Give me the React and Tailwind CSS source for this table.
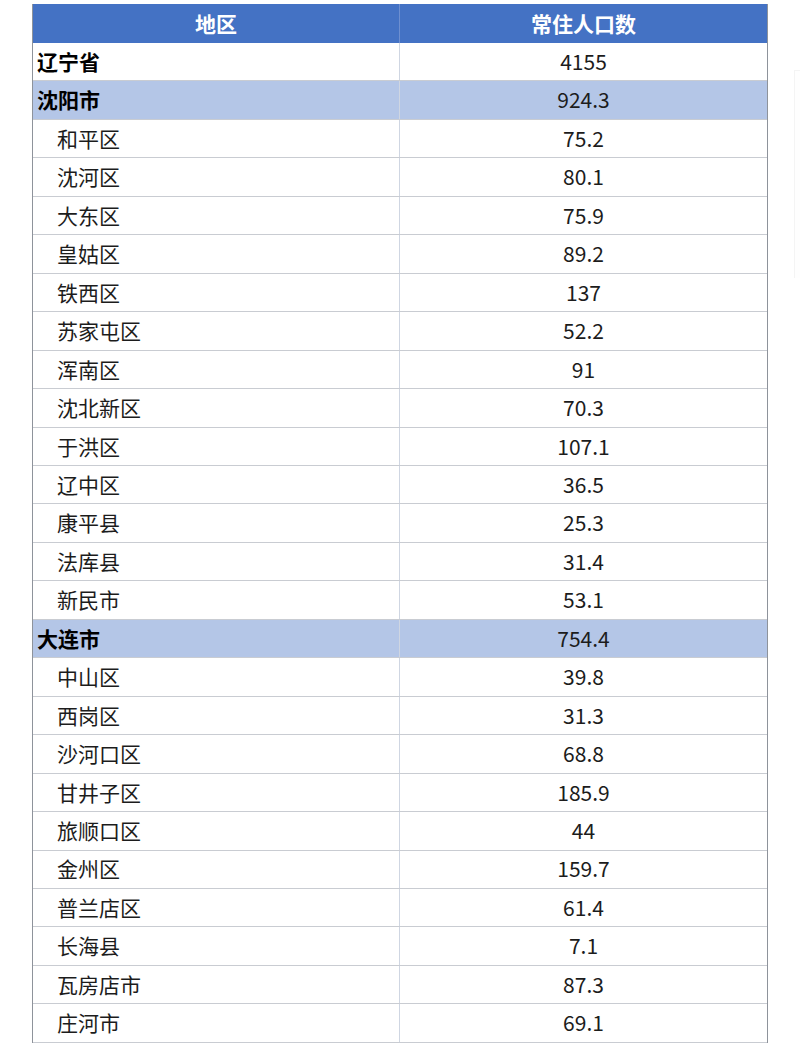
import React from "react";

const rows = [
  { name: "辽宁省", value: "4155", level: 0 },
  { name: "沈阳市", value: "924.3", level: 1 },
  { name: "和平区", value: "75.2" },
  { name: "沈河区", value: "80.1" },
  { name: "大东区", value: "75.9" },
  { name: "皇姑区", value: "89.2" },
  { name: "铁西区", value: "137" },
  { name: "苏家屯区", value: "52.2" },
  { name: "浑南区", value: "91" },
  { name: "沈北新区", value: "70.3" },
  { name: "于洪区", value: "107.1" },
  { name: "辽中区", value: "36.5" },
  { name: "康平县", value: "25.3" },
  { name: "法库县", value: "31.4" },
  { name: "新民市", value: "53.1" },
  { name: "大连市", value: "754.4", level: 1 },
  { name: "中山区", value: "39.8" },
  { name: "西岗区", value: "31.3" },
  { name: "沙河口区", value: "68.8" },
  { name: "甘井子区", value: "185.9" },
  { name: "旅顺口区", value: "44" },
  { name: "金州区", value: "159.7" },
  { name: "普兰店区", value: "61.4" },
  { name: "长海县", value: "7.1" },
  { name: "瓦房店市", value: "87.3" },
  { name: "庄河市", value: "69.1" },
];

const Row = ({ name, value, level }) => {
  const city = level === 1;
  const top = level === 0 || level === 1;
  return (
    <div
      className={
        "grid grid-cols-2 h-[38.46px] border-b border-[#c9ccd2] " +
        (city ? "bg-[#b4c6e7]" : "bg-white")
      }
    >
      <div
        className={
          "flex items-center border-r border-[#cfd6e2] " +
          (top ? "pl-1 font-bold text-black" : "pl-6 text-[#1c1c1c]")
        }
      >
        {name}
      </div>
      <div className="flex items-center justify-center text-[#1c1c1c]">
        {value}
      </div>
    </div>
  );
};

export default function App() {
  return (
    <div
      className="w-[800px] h-[1043px] overflow-hidden bg-white pt-1 pl-8 flex flex-row text-[21px]"
      style={{ fontFamily: '"Noto Sans CJK SC", "Noto Sans", sans-serif' }}
    >
      <div className="w-[736px] shrink-0 border-x border-[#8e939b] flex flex-col">
        <div className="grid grid-cols-2 h-[39px] bg-[#4472c4] text-white font-bold">
          <div className="flex items-center justify-center border-r border-[#6e8fd0]">
            地区
          </div>
          <div className="flex items-center justify-center">常住人口数</div>
        </div>
        {rows.map((r) => (
          <Row key={r.name} {...r} />
        ))}
      </div>
      <div className="flex-1 pt-[66px] pl-[26px]">
        <div className="h-[208px] border-l border-t border-[#f4f4f4] bg-[#fefefe]" />
      </div>
    </div>
  );
}
